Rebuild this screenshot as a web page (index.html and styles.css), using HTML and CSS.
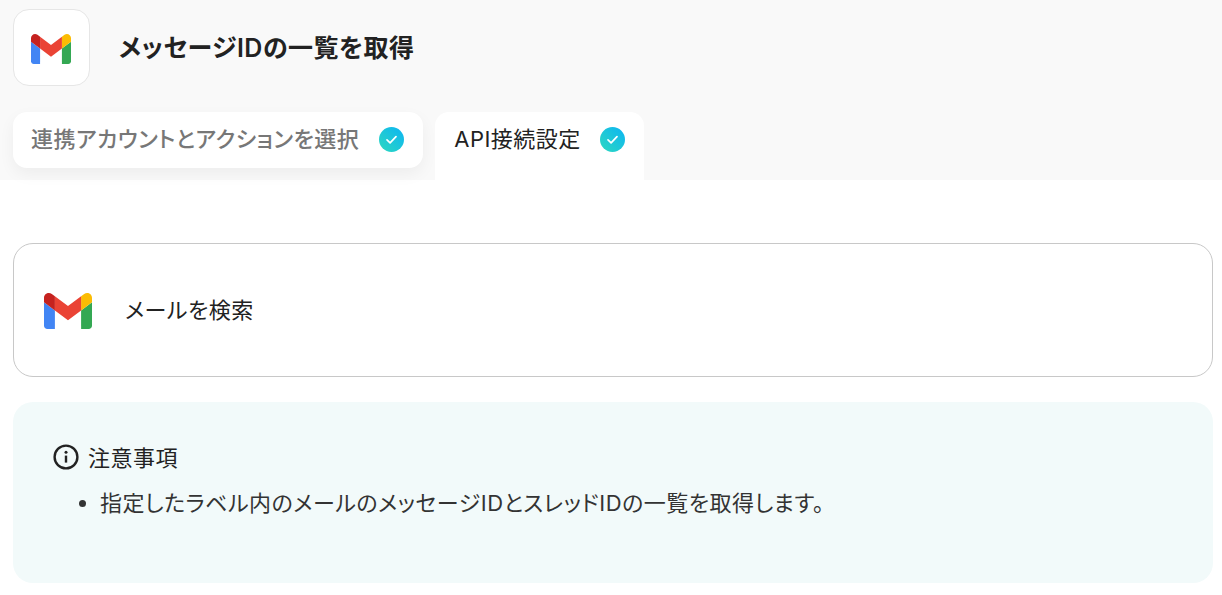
FILE: index.html
```html
<!DOCTYPE html>
<html lang="ja">
<head>
  <meta charset="UTF-8" />
  <title>メッセージIDの一覧を取得</title>
  <link rel="stylesheet" href="styles.css">
</head>
<body>

  <!-- Header with tabs -->
  <div class="top">
    <div class="title-row">
      <div class="app-icon">
        <svg class="gmail gmail-small" viewBox="0 0 48 36"><use href="#gmailLogo"/></svg>
      </div>
      <h1>メッセージIDの一覧を取得</h1>
    </div>
    <div class="tabs">
      <div class="tab tab-done">
        <span>連携アカウントとアクションを選択</span>
        <svg class="check" viewBox="0 0 25 25"><use href="#checkIcon"/></svg>
      </div>
      <div class="tab tab-active">
        <span>API接続設定</span>
        <svg class="check" viewBox="0 0 25 25"><use href="#checkIcon"/></svg>
      </div>
    </div>
  </div>

  <!-- Main area -->
  <div class="content">
    <div class="action-card">
      <svg class="gmail gmail-large" viewBox="0 0 48 36"><use href="#gmailLogo"/></svg>
      <span>メールを検索</span>
    </div>

    <div class="notice">
      <div class="notice-title">
        <svg class="info" viewBox="0 0 26 26" fill="none">
          <circle cx="13" cy="13" r="11.4" stroke="#222" stroke-width="2.4"/>
          <rect x="11.8" y="11.6" width="2.4" height="7" fill="#222"/>
          <circle cx="13" cy="8.3" r="1.5" fill="#222"/>
        </svg>
        <span>注意事項</span>
      </div>
      <ul>
        <li>指定したラベル内のメールのメッセージIDとスレッドIDの一覧を取得します。</li>
      </ul>
    </div>
  </div>

  <!-- Shared icons -->
  <svg class="defs" width="0" height="0">
    <defs>
      <linearGradient id="checkGrad" x1="0" y1="1" x2="1" y2="0">
        <stop offset="0" stop-color="#2dd9bf"/>
        <stop offset="1" stop-color="#0cb4f4"/>
      </linearGradient>
      <symbol id="checkIcon" viewBox="0 0 25 25">
        <circle cx="12.5" cy="12.5" r="12.5" fill="url(#checkGrad)"/>
        <path d="M8 12.800l3.100 3 5.900-6.200" fill="none" stroke="#fff" stroke-width="1.700" stroke-linecap="round" stroke-linejoin="round"/>
      </symbol>
      <symbol id="gmailLogo" viewBox="0 0 48 36">
        <path d="M3.300 36h7.600V17.500L0 9.300v23.400C0 34.500 1.500 36 3.300 36z" fill="#4285f4"/>
        <path d="M37.100 36h7.600c1.800 0 3.300-1.500 3.300-3.300V9.300l-10.900 8.200z" fill="#34a853"/>
        <path d="M37.100 3.300v14.200L48 9.300V4.900c0-4-4.600-6.300-7.800-3.900z" fill="#fbbc04"/>
        <path d="M10.900 17.500V3.300L24 13.100l13.100-9.800v14.200L24 27.300z" fill="#ea4335"/>
        <path d="M0 4.900v4.400l10.900 8.200V3.300L7.800 1C4.600-1.400 0 .9 0 4.900z" fill="#c5221f"/>
      </symbol>
    </defs>
  </svg>

</body>
</html>
```

FILE: styles.css
```css
* {
  margin: 0; padding: 0;
  box-sizing: border-box;
}

body, html {
  font-family: 'Inter', 'Noto Sans CJK JP', sans-serif;
  font-feature-settings: "palt";
  letter-spacing: 0.5px;
  background: #fff;
  color: #222;
}

.top {
  background: #f9f9f9;
  height: 180px;
  padding: 9px 13px 0;
}

.title-row {
  display: flex;
  align-items: center;
  gap: 29px;
  height: 77px;
}

.app-icon {
  width: 77px;
  height: 77px;
  padding: 2px 1px 0 0;
  background: white;
  border: 1px solid #e6e6e6;
  border-radius: 16px;
  display: flex;
  align-items: center;
  justify-content: center;
}

.gmail {
  display: block;
}

.gmail-small {
  width: 40px;
  height: 30px;
}

.gmail-large {
  width: 48px;
  height: 36px;
  margin-top: 2px;
}

h1 {
  font-size: 25px;
  font-weight: 600;
  color: #222;
  margin-bottom: 3px;
}

.tabs {
  display: flex;
  gap: 12px;
  margin-top: 26px;
}

.tab {
  display: flex;
  align-items: center;
  gap: 20px;
  height: 56px;
  padding: 0 19px 1px 18px;
  background: white;
  font-size: 22px;
  border-radius: 14px;
}

.tab span {
  margin-bottom: 5px;
}

.tab-done {
  color: #777;
  font-weight: 500;
  box-shadow: 0 6px 16px rgba(0, 0, 0, 0.05);
}

.tab-active {
  color: #222;
  font-weight: 400;
  height: 68px;
  gap: 19px;
  padding: 0 19px 13px;
  border-radius: 14px 14px 0 0;
}

.check {
  width: 25px;
  height: 25px;
}

.content {
  padding: 63px 9px 0 13px;
}

.action-card {
  display: flex;
  align-items: center;
  gap: 32px;
  height: 134px;
  padding: 0 30px;
  border: 1px solid #c8c8c8;
  border-radius: 20px;
  font-size: 22px;
  color: #222;
}

.action-card span {
  margin: 0 0 4px 1px;
}

.notice {
  margin-top: 25px;
  height: 181px;
  padding: 38px 40px 0;
  background: #f2fafa;
  border-radius: 20px;
}

.notice-title {
  display: flex;
  align-items: center;
  gap: 9px;
  font-size: 22px;
  font-weight: 400;
}

.info {
  width: 26px;
  height: 26px;
  margin-top: 2px;
}

ul {
  margin-top: 13px;
  padding-left: 47px;
  font-size: 22px;
  color: #333;
}

.defs {
  position: absolute;
}
```
